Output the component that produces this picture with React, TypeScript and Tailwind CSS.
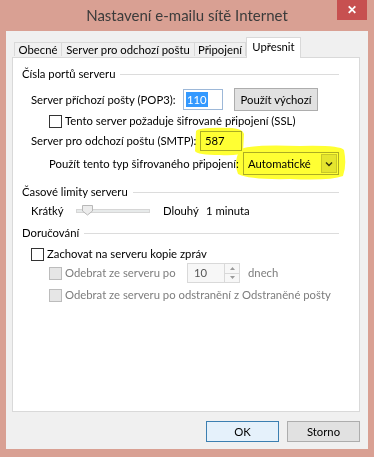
import React from "react";

function GroupLabel({ text }: { text: string }) {
  return (
    <div className="flex items-center h-[16px] pr-[20px]">
      <span>{text}</span>
      <div className="flex-1 h-px bg-[#dcdcdc] ml-[5px]" />
    </div>
  );
}

function Checkbox({ disabled }: { disabled?: boolean }) {
  return (
    <div
      className={
        disabled
          ? "w-[13px] h-[13px] border border-[#bcbcbc] bg-[#e6e6e6] shrink-0"
          : "w-[13px] h-[13px] border border-[#333333] bg-white shrink-0"
      }
    />
  );
}

export default function App() {
  return (
    <div className="w-[374px] h-[457px] bg-[#d9a093] flex flex-col font-['Lato',sans-serif] text-[11.3px] text-black leading-[16px] whitespace-nowrap relative overflow-hidden">
      {/* Title bar */}
      <div className="h-[31px] flex items-start relative shrink-0">
        <div className="flex-1 text-center text-[15px] text-[#3b3b3b] pt-[5px] leading-[20px]">
          Nastavení e-mailu sítě Internet
        </div>
        <div className="absolute right-[7px] top-0 w-[30px] h-[20px] bg-[#c75050] flex items-center justify-center text-white text-[12px] font-bold">
          ✕
        </div>
      </div>

      {/* Client area */}
      <div className="flex-1 mx-[6px] mb-[8px] bg-[#f0f0f0] flex flex-col pl-[6px] pr-[8px]">
        {/* Tabs */}
        <div className="flex items-end h-[26px] pl-[2px] relative z-10">
          <div className="w-[48px] h-[14px] border border-b-0 border-[#d9d9d9] bg-[#f0f0f0] flex items-center justify-center mb-px">Obecné</div>
          <div className="w-[133px] h-[14px] border border-b-0 border-l-0 border-[#d9d9d9] bg-[#f0f0f0] flex items-center justify-center mb-px">Server pro odchozí poštu</div>
          <div className="w-[51px] h-[14px] border border-b-0 border-l-0 border-[#d9d9d9] bg-[#f0f0f0] flex items-center justify-center mb-px">Připojení</div>
          <div className="w-[55px] h-[21px] border border-b-0 border-[#d9d9d9] bg-white flex items-start justify-center pt-[1px] -mb-px">Upřesnit</div>
        </div>

        {/* Panel */}
        <div className="h-[355px] border border-[#d9d9d9] bg-white pt-[8px] pl-[9px] flex flex-col">
          <GroupLabel text="Čísla portů serveru" />

          <div className="flex items-center h-[23px] mt-[6px] pl-[9px]">
            <span className="w-[152px] shrink-0">Server příchozí pošty (POP3):</span>
            <div className="w-[40px] h-[21px] shrink-0 border border-[#9db8d8] bg-white flex items-center pl-[2px]">
              <span className="bg-[#3399ff] text-white px-[1px] leading-[15px]">110</span>
            </div>
            <div className="ml-[11px] w-[84px] h-[23px] shrink-0 border border-[#adadad] bg-[#e1e1e1] flex items-center justify-center">
              Použít výchozí
            </div>
          </div>

          <div className="flex items-center h-[14px] mt-[3px] pl-[27px] gap-[3px]">
            <Checkbox />
            <span>Tento server požaduje šifrované připojení (SSL)</span>
          </div>

          <div className="flex items-center h-[20px] mt-[3px] pl-[9px]">
            <span className="w-[169px] shrink-0">Server pro odchozí poštu (SMTP):</span>
            <div className="w-[42px] h-[20px] shrink-0 border border-[#abadb3] bg-white flex items-center pl-[4px]">587</div>
          </div>

          <div className="flex items-center h-[23px] mt-px pl-[27px]">
            <span className="w-[194px] shrink-0">Použít tento typ šifrovaného připojení:</span>
            <div className="w-[96px] h-[23px] shrink-0 border border-[#acacac] bg-white flex items-center pl-[4px]">
              <span className="flex-1">Automatické</span>
              <div className="w-[16px] h-[19px] mr-px bg-[#e5e5e5] border border-[#c8c8c8] flex items-center justify-center">
                <svg width="8" height="6" viewBox="0 0 8 6">
                  <path d="M1 1.5 L4 4.5 L7 1.5" stroke="#333" strokeWidth="1.4" fill="none" />
                </svg>
              </div>
            </div>
          </div>

          <div className="mt-[9px]">
            <GroupLabel text="Časové limity serveru" />
          </div>

          <div className="flex items-center h-[16px] mt-[3px] pl-[9px]">
            <span className="w-[45px] shrink-0">Krátký</span>
            <div className="w-[74px] h-[4px] shrink-0 border border-[#d6d6d6] bg-[#e7eaea] relative">
              <div className="absolute left-[5px] -top-[5px]">
                <svg width="11" height="11" viewBox="0 0 11 11">
                  <path d="M0.5 0.5 H10.5 V6 L5.5 10 L0.5 6 Z" fill="#ececec" stroke="#b8b8b8" />
                </svg>
              </div>
            </div>
            <span className="ml-[13px] w-[43px] shrink-0">Dlouhý</span>
            <span>1 minuta</span>
          </div>

          <div className="mt-[6px]">
            <GroupLabel text="Doručování" />
          </div>

          <div className="flex items-center h-[14px] mt-[6px] pl-[9px] gap-[3px]">
            <Checkbox />
            <span>Zachovat na serveru kopie zpráv</span>
          </div>

          <div className="flex items-center h-[20px] mt-[2px] pl-[27px] text-[#7d7d7d]">
            <Checkbox disabled />
            <span className="ml-[3px] w-[122px] shrink-0">Odebrat ze serveru po</span>
            <div className="w-[53px] h-[20px] shrink-0 border border-[#d9d9d9] bg-[#f7f7f7] flex items-center">
              <span className="flex-1 pl-[6px] text-[#555]">10</span>
              <div className="w-[15px] h-[18px] flex flex-col border-l border-[#d9d9d9]">
                <div className="flex-1 flex items-center justify-center border-b border-[#d9d9d9]">
                  <svg width="5" height="3" viewBox="0 0 5 3"><path d="M0 3 L2.5 0 L5 3 Z" fill="#9a9a9a" /></svg>
                </div>
                <div className="flex-1 flex items-center justify-center">
                  <svg width="5" height="3" viewBox="0 0 5 3"><path d="M0 0 L2.5 3 L5 0 Z" fill="#9a9a9a" /></svg>
                </div>
              </div>
            </div>
            <span className="ml-[8px]">dnech</span>
          </div>

          <div className="flex items-center h-[14px] mt-[5px] pl-[27px] gap-[3px] text-[#7d7d7d]">
            <Checkbox disabled />
            <span>Odebrat ze serveru po odstranění z Odstraněné pošty</span>
          </div>
        </div>

        {/* Buttons */}
        <div className="flex justify-end gap-[8px] mt-[9px]">
          <div className="w-[73px] h-[21px] border border-[#3c7fb1] bg-[#e5f1fb] flex items-center justify-center">OK</div>
          <div className="w-[73px] h-[21px] border border-[#adadad] bg-[#e1e1e1] flex items-center justify-center">Storno</div>
        </div>
      </div>

      {/* Yellow highlighter marks */}
      <svg className="absolute left-0 top-0 pointer-events-none mix-blend-multiply" width="374" height="457" viewBox="0 0 374 457">
        <path d="M196 131 Q199 127 232 128 Q243 129 244 134 L243 152 Q240 156 220 155 Q197 155 195 151 Z" fill="#ffff33" />
        <path d="M240 150 Q246 144 300 146 Q340 145 344 150 Q347 165 343 176 Q330 181 290 179 Q250 180 238 174 Q233 162 240 150 Z" fill="#ffff33" />
      </svg>
    </div>
  );
}
